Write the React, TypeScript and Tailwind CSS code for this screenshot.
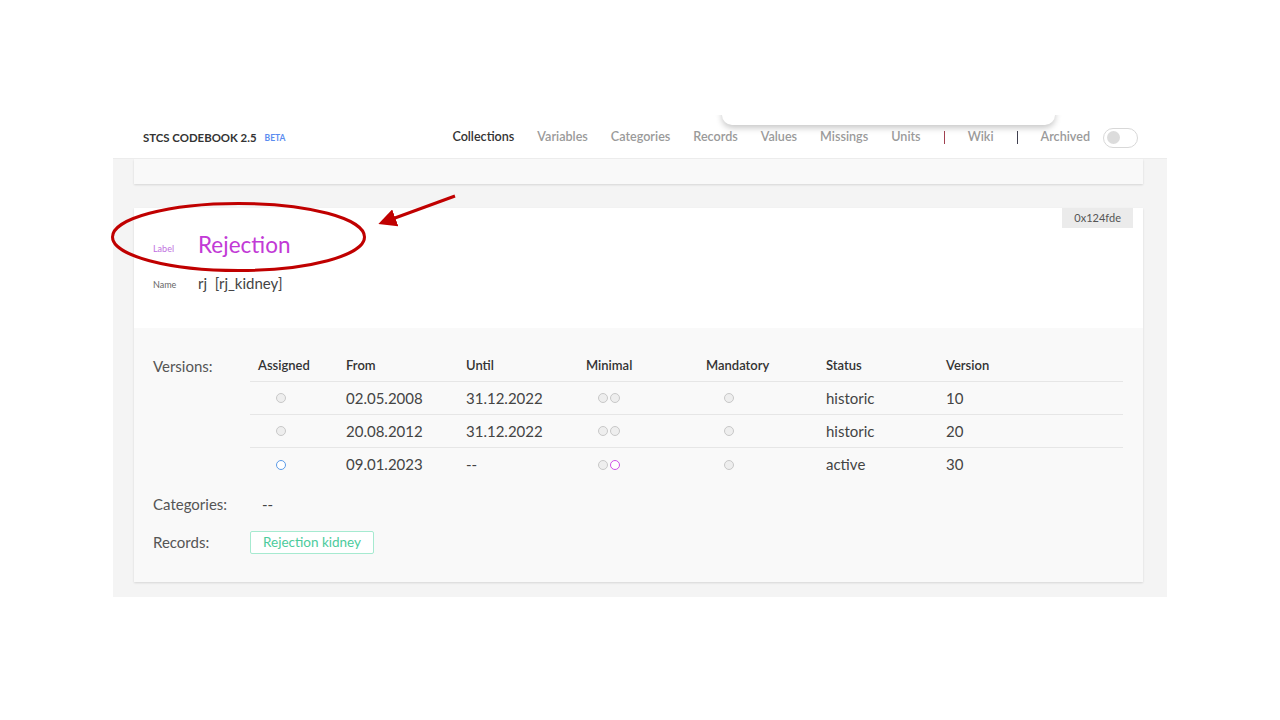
const nav = ["Variables", "Categories", "Records", "Values", "Missings", "Units"];

const versions = [
  { assigned: false, from: "02.05.2008", until: "31.12.2022", minimal: false, status: "historic", version: "10" },
  { assigned: false, from: "20.08.2012", until: "31.12.2022", minimal: false, status: "historic", version: "20" },
  { assigned: true, from: "09.01.2023", until: "--", minimal: true, status: "active", version: "30" },
];

const Dot = ({ tone = "off" }: { tone?: "off" | "blue" | "purple" }) => {
  const cls =
    tone === "blue"
      ? "border-[#5b9be8] bg-white"
      : tone === "purple"
        ? "border-[#d050e8] bg-white"
        : "border-[#c8c8c8] bg-[#eeeeee]";
  return <span className={`inline-block w-[10px] h-[10px] rounded-full border ${cls}`} />;
};

const App = () => {
  return (
    <div className="relative w-[1280px] h-[720px] bg-white overflow-hidden font-['Lato',sans-serif]">
      <div className="ml-[113px] pt-[115px] w-[1054px]">
        {/* Top bar */}
        <header className="relative h-[44px] bg-white flex items-center pt-[2px] pl-[30px] pr-[29px] border-b border-[#ececec] overflow-hidden">
          <div className="absolute left-[609px] top-[-30px] w-[333px] h-[40px] rounded-b-[10px] bg-white shadow-[0_3px_6px_rgba(0,0,0,0.22)]" />
          <span className="text-[11.4px] font-bold text-[#333]">STCS CODEBOOK 2.5</span>
          <span className="ml-[8px] text-[8.5px] font-bold text-[#5a8cf0] mt-[2px]">BETA</span>
          <nav className="ml-auto relative flex items-center gap-[23px] text-[12.6px] font-semibold text-[#9a9a9a]">
            <span className="text-[#333]">Collections</span>
            {nav.map((n) => (
              <span key={n}>{n}</span>
            ))}
            <span className="w-px h-[13px] bg-[#a04050]" />
            <span>Wiki</span>
            <span className="w-px h-[13px] bg-[#404050]" />
            <span>Archived</span>
            <span className="ml-[-10px] w-[35px] h-[20px] rounded-full border border-[#d8d8d8] bg-white flex items-center px-[3px]">
              <span className="w-[13px] h-[13px] rounded-full bg-[#dcdcdc]" />
            </span>
          </nav>
        </header>

        <main className="bg-[#f4f4f4] px-[21px] pb-[15px] pr-[24px]">
          <div className="h-[25px] bg-[#f9f9f9] shadow-[0_1px_2px_rgba(0,0,0,0.12)]" />

          <div className="mt-[24px] shadow-[0_1px_2px_rgba(0,0,0,0.12)]">
            {/* Label / name */}
            <div className="relative h-[120px] bg-white pt-[21px] pl-[19px]">
              <span className="absolute right-[10px] top-0 h-[20px] px-[12px] bg-[#ebebeb] text-[11px] text-[#555] flex items-center">
                0x124fde
              </span>
              <div className="flex items-center h-[32px]">
                <span className="w-[45px] text-[9px] text-[#c070e0] mt-[8px]">Label</span>
                <span className="text-[22.5px] text-[#c23ad6]">Rejection</span>
              </div>
              <div className="flex items-center h-[26px] mt-[9px]">
                <span className="w-[45px] text-[9px] text-[#666] mt-[4px]">Name</span>
                <span className="text-[15px] text-[#444]">rj&nbsp;&nbsp;[rj_kidney]</span>
              </div>
            </div>

            {/* Versions & relations */}
            <div className="bg-[#f9f9f9] pt-[23px] pb-[28px] pl-[19px] pr-[20px] text-[#444]">
              <div className="flex">
                <div className="w-[97px] h-[31px] flex items-center text-[15px] text-[#555]">Versions:</div>
                <div className="flex-1">
                  <div className="grid grid-cols-[88px_120px_120px_120px_120px_120px_1fr] h-[31px] items-center border-b border-[#e6e6e6] text-[13px] font-semibold text-[#333]">
                    <span className="pl-[8px]">Assigned</span>
                    <span className="pl-[8px]">From</span>
                    <span className="pl-[8px]">Until</span>
                    <span className="pl-[8px]">Minimal</span>
                    <span className="pl-[8px]">Mandatory</span>
                    <span className="pl-[8px]">Status</span>
                    <span className="pl-[8px]">Version</span>
                  </div>
                  {versions.map((v, i) => (
                    <div
                      key={v.from}
                      className={`grid grid-cols-[88px_120px_120px_120px_120px_120px_1fr] h-[33px] items-center text-[15px] ${i < versions.length - 1 ? "border-b border-[#e6e6e6]" : ""}`}
                    >
                      <span className="pl-[26px] flex items-center">
                        <Dot tone={v.assigned ? "blue" : "off"} />
                      </span>
                      <span className="pl-[8px]">{v.from}</span>
                      <span className="pl-[8px]">{v.until}</span>
                      <span className="pl-[20px] flex items-center gap-[2px]">
                        <Dot />
                        <Dot tone={v.minimal ? "purple" : "off"} />
                      </span>
                      <span className="pl-[26px] flex items-center">
                        <Dot />
                      </span>
                      <span className="pl-[8px]">{v.status}</span>
                      <span className="pl-[8px]">{v.version}</span>
                    </div>
                  ))}
                </div>
              </div>

              <div className="flex items-center h-[28px] mt-[9px]">
                <span className="w-[97px] text-[15px] text-[#555]">Categories:</span>
                <span className="pl-[12px] text-[15px]">--</span>
              </div>
              <div className="flex items-center h-[24px] mt-[12px]">
                <span className="w-[97px] text-[15px] text-[#555]">Records:</span>
                <span className="h-[23px] px-[12px] flex items-center border border-[#a6ead0] rounded-[2px] bg-white text-[13.5px] text-[#4ccb9c]">
                  Rejection kidney
                </span>
              </div>
            </div>
          </div>
        </main>
      </div>

      {/* Annotation: ring and pointer */}
      <svg className="absolute inset-0 pointer-events-none" width="1280" height="720">
        <defs>
          <marker id="head" markerWidth="6" markerHeight="6" refX="4" refY="3" orient="auto" markerUnits="strokeWidth">
            <path d="M0,0 L6,3 L0,6 Z" fill="#c00000" />
          </marker>
        </defs>
        <ellipse cx="238.5" cy="237" rx="126" ry="33.5" fill="none" stroke="#c00000" strokeWidth="3" />
        <line x1="455" y1="196" x2="384" y2="222" stroke="#c00000" strokeWidth="3" markerEnd="url(#head)" />
      </svg>
    </div>
  );
};

export default App;
